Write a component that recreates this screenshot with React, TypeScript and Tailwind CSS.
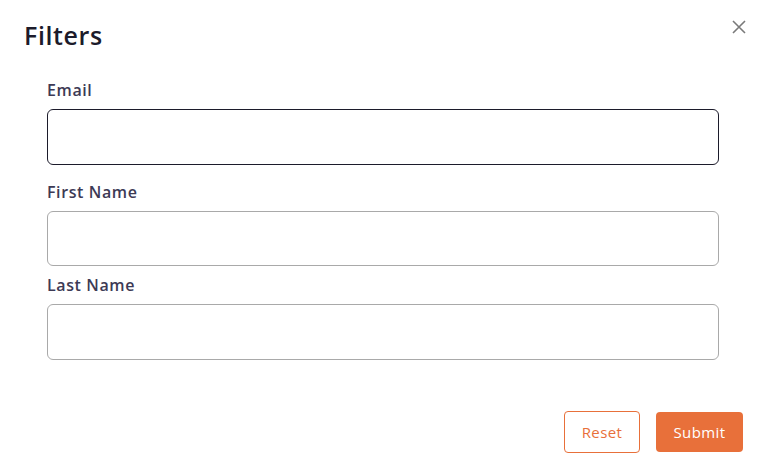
import React from "react";

export default function App() {
  const font = { fontFamily: '"Open Sans", "Noto Sans", sans-serif' };
  return (
    <div className="w-[763px] h-[476px] bg-white relative" style={font}>
      <div className="flex items-start justify-between pl-6 pr-[14px] pt-[18px]">
        <h1 className="text-[25px] leading-[34px] font-semibold text-[#1c1b2b] tracking-[0.6px]">Filters</h1>
        <button className="-mt-[1px] w-[20px] h-[20px] flex items-center justify-center text-[#7a7a7a]">
          <svg width="16" height="16" viewBox="0 0 16 16" fill="none" stroke="currentColor" strokeWidth="1.6">
            <path d="M2 2L14 14M14 2L2 14" />
          </svg>
        </button>
      </div>
      <div className="pl-[47px] pr-[44px] mt-[27px] flex flex-col">
        <label className="text-[16px] leading-[22px] font-semibold text-[#3d3a55] tracking-[0.6px]">Email</label>
        <div className="mt-[8px] h-[56px] rounded-[6px] border border-[#1c1b2b]" />
        <label className="mt-[16px] text-[16px] leading-[22px] font-semibold text-[#3d3a55] tracking-[0.6px]">First Name</label>
        <div className="mt-[8px] h-[55px] rounded-[6px] border border-[#a9a9a9]" />
        <label className="mt-[8px] text-[16px] leading-[22px] font-semibold text-[#3d3a55] tracking-[0.6px]">Last Name</label>
        <div className="mt-[8px] h-[56px] rounded-[6px] border border-[#a9a9a9]" />
      </div>
      <div className="flex justify-end gap-4 pr-5 mt-[51px]">
        <button className="w-[76px] h-[42px] rounded-[4px] border border-[#e8703a] text-[#e8703a] text-[15px] tracking-[0.4px]">Reset</button>
        <button className="w-[87px] h-[40px] mt-[1px] rounded-[4px] bg-[#e8703a] text-white text-[15px] tracking-[0.4px]">Submit</button>
      </div>
    </div>
  );
}
